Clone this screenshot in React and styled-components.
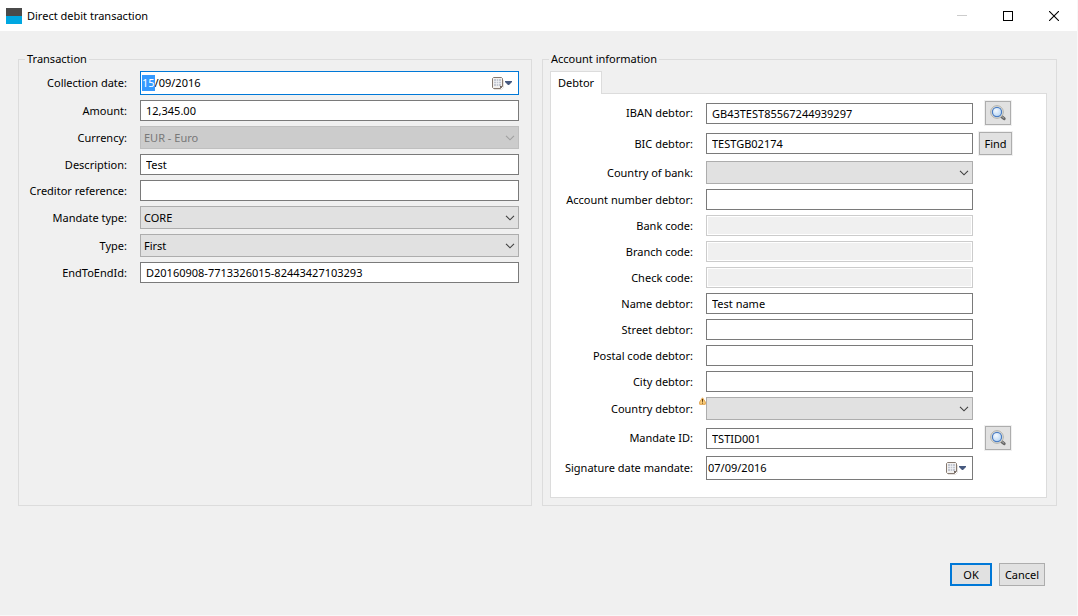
import React, { useEffect, useRef, useState } from 'react';
import styled, { createGlobalStyle } from 'styled-components';

const GlobalStyle = createGlobalStyle`
  * {
    box-sizing: border-box;
  }

  body {
    margin: 0;
    background: #f0f0f0;
  }

  body, input, select, button {
    font-family: "Noto Sans", "Open Sans", sans-serif;
    font-size: 11px;
    line-height: 16px;
    color: #000;
  }
`;

// Window
const Window = styled.div`
  display: flex;
  flex-direction: column;
  min-height: 100vh;
  border-right: 1px solid #f8f8f8;
  border-bottom: 1px solid #f8f8f8;
`;

const TitleBar = styled.header`
  display: flex;
  align-items: center;
  height: 31px;
  padding-left: 6px;
  background: #fff;
`;

const Title = styled.h1`
  flex: 1;
  margin: 0 0 0 5px;
  font-size: 11px;
  font-weight: 400;
`;

const WindowButton = styled.button`
  display: flex;
  align-items: center;
  justify-content: center;
  width: 46px;
  height: 31px;
  padding: 0;
  border: none;
  background: transparent;
`;

// Form layout
const Form = styled.form`
  flex: 1;
  display: flex;
  flex-direction: column;
  justify-content: space-between;
  padding: 20px 20px 29px 18px;
`;

const Groups = styled.div`
  display: grid;
  grid-template-columns: 514fr 515fr;
  gap: 10px;
`;

const Group = styled.fieldset`
  min-width: 0;
  margin: 0;
  padding: 0;
  border: 1px solid #dcdcdc;
`;

const Legend = styled.legend`
  margin-left: 6px;
  padding: 0 2px;
`;

const GroupBody = styled.div`
  padding: ${(props) => (props.$tabbed ? '4px 9px 7px 7px' : '4px 12px 7px 10px')};
`;

const Rows = styled.div`
  display: flex;
  flex-direction: column;
  gap: 5px;
`;

const Row = styled.div`
  display: grid;
  grid-template-columns: ${(props) => (props.$wide ? '131px 1fr 40px' : '98px 1fr')};
  align-items: center;
`;

const Label = styled.label`
  justify-self: end;
  white-space: nowrap;
`;

const Control = styled.div`
  position: relative;
  display: flex;
  margin-left: 13px;
`;

// Tabs
const TabList = styled.div`
  display: flex;
`;

const Tab = styled.button`
  z-index: 1;
  min-width: 52px;
  height: 23px;
  margin-bottom: -1px;
  padding: 0 6px;
  border: 1px solid #dcdcdc;
  border-bottom: none;
  background: #fff;
`;

const TabPanel = styled.div`
  padding: 6px 33px 17px 11px;
  border: 1px solid #dcdcdc;
  background: #fff;
`;

// Fields
const TextInput = styled.input`
  flex: 1;
  min-width: 0;
  height: 21px;
  padding: 0 5px;
  border: 1px solid #7a7a7a;
  border-radius: 0;
  outline: none;
  background: #fff;

  &:disabled {
    border-color: #ccc;
    background: #f0f0f0;
    box-shadow: inset 0 0 0 1px #fff;
  }
`;

const Select = styled.select`
  flex: 1;
  min-width: 0;
  height: 23px;
  padding: 0 20px 0 3px;
  appearance: none;
  border: 1px solid #adadad;
  border-radius: 0;
  outline: none;
  background: #e1e1e1;

  &:disabled {
    border-color: #bfbfbf;
    background: #ccc;
    color: #787878;
    opacity: 1;
  }
`;

const Chevron = styled.svg`
  position: absolute;
  top: 9px;
  right: 4px;
  pointer-events: none;
  color: ${(props) => (props.$disabled ? '#a0a0a0' : '#404040')};
`;

const Warning = styled.svg`
  position: absolute;
  top: 0;
  left: -7px;
`;

const DateBox = styled.div`
  flex: 1;
  display: flex;
  align-items: center;
  min-width: 0;
  height: 24px;
  padding: 0 5px 0 1px;
  border: 1px solid #7a7a7a;
  background: #fff;

  &:focus-within {
    border-color: #0078d7;
  }
`;

const DateInput = styled.input`
  flex: 1;
  min-width: 0;
  padding: 0;
  border: none;
  outline: none;
  background: transparent;

  &::selection {
    background: rgba(51, 153, 255, 0.99);
    color: #fff;
  }
`;

const DateButton = styled.button`
  display: flex;
  padding: 0;
  border: none;
  background: transparent;
`;

// Buttons
const Button = styled.button`
  min-width: ${(props) => (props.$primary ? '42px' : '46px')};
  height: 23px;
  padding: 0 3px;
  border: ${(props) => (props.$primary ? '2px solid #0078d7' : '1px solid #adadad')};
  background: #e1e1e1;
`;

const Side = styled.div`
  display: flex;
  justify-self: end;
`;

const SideButton = styled(Button)`
  display: flex;
  align-items: center;
  justify-content: center;
  min-width: 0;
  width: ${(props) => (props.$icon ? '26px' : '33px')};
  height: ${(props) => (props.$icon ? '24px' : '23px')};
  margin: 1px ${(props) => (props.$icon ? '2px' : '1px')} 1px 1px;
  padding: 0;
  box-shadow: 0 0 0 1px #f0f0f0;
`;

const Footer = styled.footer`
  display: flex;
  justify-content: flex-end;
  gap: 7px;
  margin-top: 40px;
  padding-right: 12px;
`;

const AppIcon = () => (
  <svg width="16" height="16" aria-hidden="true">
    <rect width="16" height="8" fill="#4a4a4a" />
    <rect y="8" width="16" height="8" fill="#00a7e1" />
  </svg>
);

const SearchIcon = () => (
  <svg width="16" height="16" viewBox="0 0 16 16" aria-hidden="true">
    <defs>
      <radialGradient id="lens" cx="0.4" cy="0.35" r="0.7">
        <stop offset="0" stopColor="#f4f9fe" />
        <stop offset="1" stopColor="#b4d4f4" />
      </radialGradient>
    </defs>
    <path d="M11.5 11.5l2.6 2.2" stroke="#666" strokeWidth="3" strokeLinecap="round" />
    <path d="M12 11.6l1.8 1.4" stroke="#b0b0b0" strokeWidth="1" strokeLinecap="round" />
    <circle cx="7" cy="7" r="6.3" fill="#ecebe6" stroke="#a6a69e" strokeWidth="0.9" />
    <circle cx="7" cy="7" r="4.6" fill="url(#lens)" stroke="#4a7cc2" strokeWidth="1.2" />
  </svg>
);

const CalendarIcon = () => (
  <svg width="21" height="16" viewBox="0 -2 21 16" aria-hidden="true">
    <path d="M2 12.5h7.5l2-2V3" fill="none" stroke="#e4e1df" />
    <path d="M1.5.5h8l1 1v8l-2 2h-7l-1-1v-9z" fill="#f3f1ef" stroke="#85786f" />
    <path d="M8 11.5v-2.5h2.5z" fill="#6b605b" />
    <rect x="2" y="2" width="7" height="7" fill="#c3c7d1" />
    <path d="M2 4.5h7M2 6.5h7M4.5 2v7M6.5 2v7" stroke="#f2f3f7" strokeWidth="0.7" />
    <path d="M13 4h7v1l-3 3h-1l-3-3z" fill="#46597f" />
  </svg>
);

const ChevronIcon = ({ disabled }) => (
  <Chevron $disabled={disabled} width="10" height="6" viewBox="0 0 10 6" aria-hidden="true">
    <path d="M1 .8l4 4 4-4" fill="none" stroke="currentColor" strokeWidth="1.1" />
  </Chevron>
);

const WarningIcon = () => (
  <Warning width="7" height="8" viewBox="0 0 7 8" role="img" aria-label="Warning">
    <path d="M3.5.8L6.3 5v2.3H.7V5z" fill="#fbcf7c" stroke="#dfa148" strokeLinejoin="round" />
    <path d="M3.5 2v2.8M3.5 5.6v1" stroke="#5c3a10" />
  </Warning>
);

const Field = ({ id, label, wide, side, children }) => (
  <Row $wide={wide}>
    <Label htmlFor={id}>{label}</Label>
    <Control>{children}</Control>
    {side && <Side>{side}</Side>}
  </Row>
);

const TextField = ({ id, label, wide, side, value = '', disabled }) => (
  <Field id={id} label={label} wide={wide} side={side}>
    <TextInput id={id} type="text" defaultValue={value} disabled={disabled} />
  </Field>
);

const SelectField = ({ id, label, wide, options = [''], disabled, warning }) => (
  <Field id={id} label={label} wide={wide}>
    <Select id={id} disabled={disabled}>
      {options.map((option) => (
        <option key={option}>{option}</option>
      ))}
    </Select>
    <ChevronIcon disabled={disabled} />
    {warning && <WarningIcon />}
  </Field>
);

const DateField = ({ id, label, wide, value, inputRef }) => (
  <Field id={id} label={label} wide={wide}>
    <DateBox>
      <DateInput id={id} ref={inputRef} type="text" defaultValue={value} />
      <DateButton type="button" aria-label="Open calendar">
        <CalendarIcon />
      </DateButton>
    </DateBox>
  </Field>
);

const SearchButton = ({ label }) => (
  <SideButton type="button" $icon aria-label={label}>
    <SearchIcon />
  </SideButton>
);

const App = () => {
  const [tab, setTab] = useState('debtor');
  const dateRef = useRef(null);

  // Start with the day part of the collection date selected
  useEffect(() => {
    dateRef.current.focus();
    dateRef.current.setSelectionRange(0, 2);
  }, []);

  return (
    <Window>
      <GlobalStyle />
      <TitleBar>
        <AppIcon />
        <Title>Direct debit transaction</Title>
        <WindowButton aria-label="Minimize" disabled>
          <svg width="10" height="10"><path d="M0 4.5h10" stroke="#ccc" /></svg>
        </WindowButton>
        <WindowButton aria-label="Maximize">
          <svg width="10" height="10"><rect x=".5" y=".5" width="9" height="9" fill="none" stroke="#000" /></svg>
        </WindowButton>
        <WindowButton aria-label="Close">
          <svg width="10" height="10"><path d="M0 0l10 10M10 0L0 10" stroke="#000" strokeWidth="1.1" /></svg>
        </WindowButton>
      </TitleBar>

      <Form onSubmit={(e) => e.preventDefault()}>
        <Groups>
          {/* Transaction */}
          <Group>
            <Legend>Transaction</Legend>
            <GroupBody>
              <Rows>
                <DateField id="collectionDate" label="Collection date:" value="15/09/2016" inputRef={dateRef} />
                <TextField id="amount" label="Amount:" value="12,345.00" />
                <SelectField id="currency" label="Currency:" options={['EUR - Euro']} disabled />
                <TextField id="description" label="Description:" value="Test" />
                <TextField id="creditorReference" label="Creditor reference:" />
                <SelectField id="mandateType" label="Mandate type:" options={['CORE']} />
                <SelectField id="type" label="Type:" options={['First']} />
                <TextField id="endToEndId" label="EndToEndId:" value="D20160908-7713326015-82443427103293" />
              </Rows>
            </GroupBody>
          </Group>

          {/* Account information */}
          <Group>
            <Legend>Account information</Legend>
            <GroupBody $tabbed>
              <TabList role="tablist">
                <Tab type="button" role="tab" aria-selected={tab === 'debtor'} onClick={() => setTab('debtor')}>
                  Debtor
                </Tab>
              </TabList>
              <TabPanel role="tabpanel">
                <Rows>
                  <TextField wide id="iban" label="IBAN debtor:" value="GB43TEST85567244939297" side={<SearchButton label="Search IBAN" />} />
                  <TextField wide id="bic" label="BIC debtor:" value="TESTGB02174" side={<SideButton type="button">Find</SideButton>} />
                  <SelectField wide id="bankCountry" label="Country of bank:" />
                  <TextField wide id="accountNumber" label="Account number debtor:" />
                  <TextField wide id="bankCode" label="Bank code:" disabled />
                  <TextField wide id="branchCode" label="Branch code:" disabled />
                  <TextField wide id="checkCode" label="Check code:" disabled />
                  <TextField wide id="name" label="Name debtor:" value="Test name" />
                  <TextField wide id="street" label="Street debtor:" />
                  <TextField wide id="postalCode" label="Postal code debtor:" />
                  <TextField wide id="city" label="City debtor:" />
                  <SelectField wide id="country" label="Country debtor:" warning />
                  <TextField wide id="mandateId" label="Mandate ID:" value="TSTID001" side={<SearchButton label="Search mandate" />} />
                  <DateField wide id="signatureDate" label="Signature date mandate:" value="07/09/2016" />
                </Rows>
              </TabPanel>
            </GroupBody>
          </Group>
        </Groups>

        <Footer>
          <Button type="submit" $primary>OK</Button>
          <Button type="button">Cancel</Button>
        </Footer>
      </Form>
    </Window>
  );
};

export default App;
